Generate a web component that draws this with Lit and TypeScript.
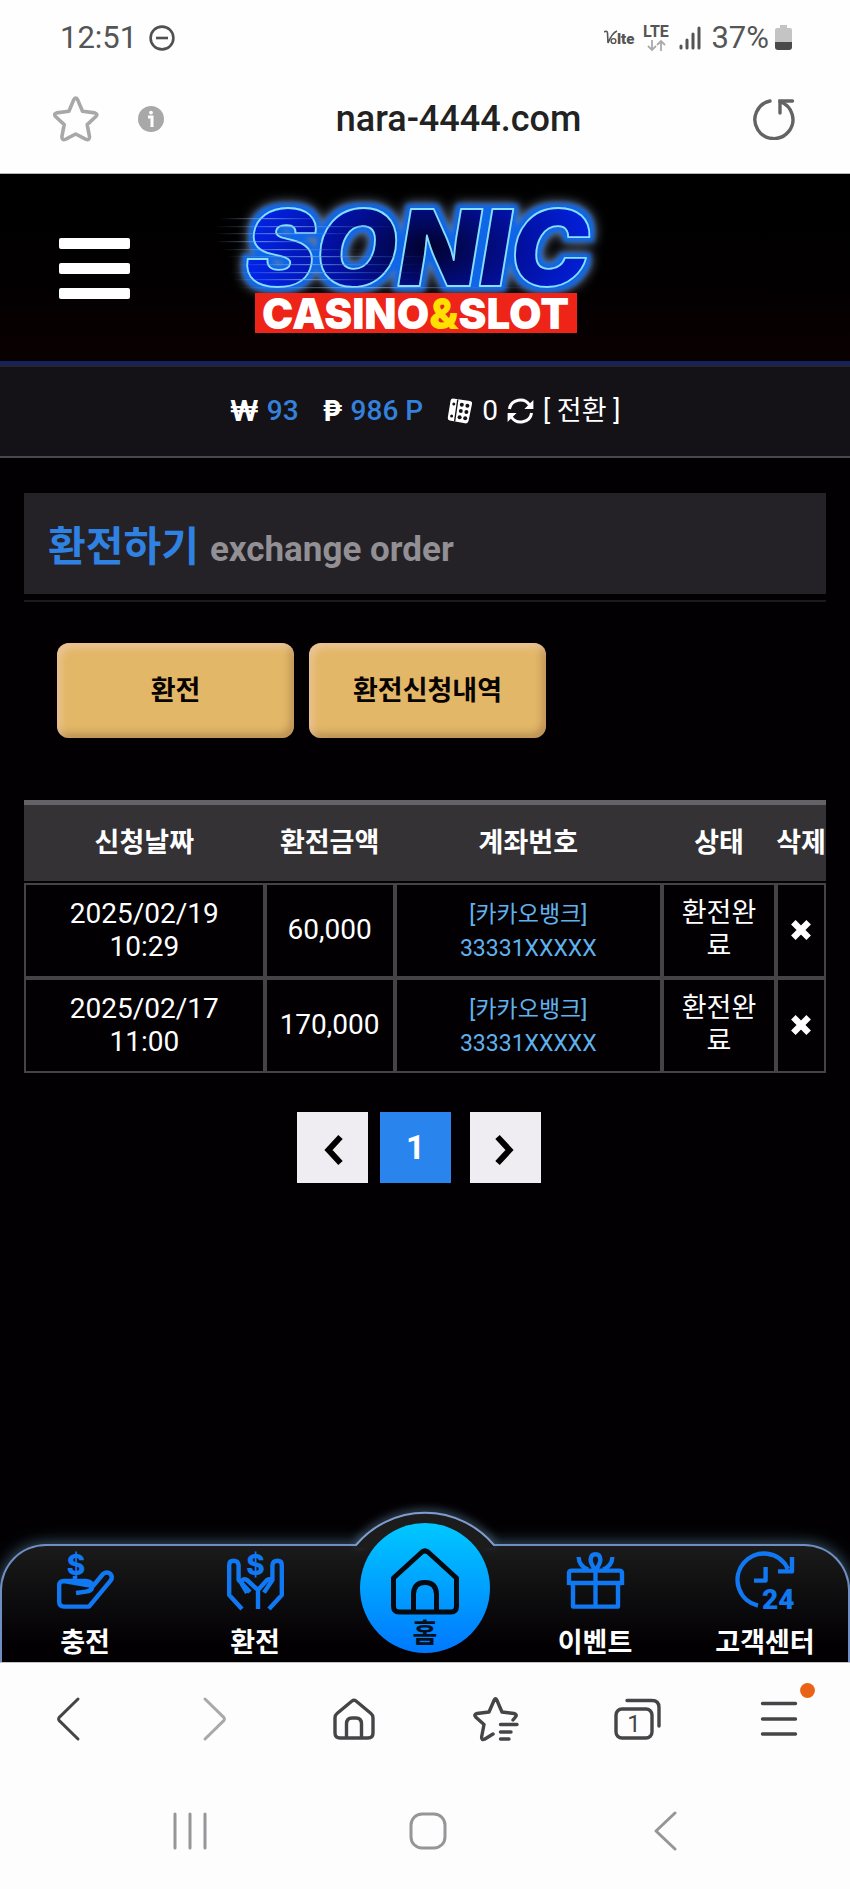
import { LitElement, html, css, svg } from "lit";
import { customElement, state } from "lit/decorators.js";

interface ExchangeRow {
  date: string;
  time: string;
  amount: string;
  bank: string;
  account: string;
  status: string;
}

const ROWS: ExchangeRow[] = [
  { date: "2025/02/19", time: "10:29", amount: "60,000", bank: "[카카오뱅크]", account: "33331XXXXX", status: "환전완료" },
  { date: "2025/02/17", time: "11:00", amount: "170,000", bank: "[카카오뱅크]", account: "33331XXXXX", status: "환전완료" },
];

const reset = css`
  * {
    box-sizing: border-box;
  }
  button {
    font: inherit;
    color: inherit;
    background: none;
    border: 0;
    padding: 0;
    margin: 0;
    cursor: pointer;
  }
  a {
    color: inherit;
    text-decoration: none;
  }
  svg {
    display: block;
    flex: none;
  }
`;

/* Phone status line and the address bar of the browser */
@customElement("browser-top")
export class BrowserTop extends LitElement {
  static styles = [
    reset,
    css`
      :host {
        display: block;
        background: #fefefe;
        border-bottom: 1px solid #b4b6b8;
      }
      .status {
        display: flex;
        align-items: center;
        height: 65px;
        padding: 11px 58px 0 60px;
        color: #555;
        font-size: 31px;
        line-height: 36px;
      }
      .time {
        margin-right: 12px;
      }
      .signals {
        display: flex;
        align-items: center;
        margin-left: auto;
      }
      .battery {
        margin-left: 6px;
      }
      .percent {
        margin-left: 9px;
      }
      .bar {
        display: flex;
        align-items: center;
        height: 108px;
        padding: 0 55px 0 53px;
      }
      .info {
        margin-left: 39px;
      }
      .address {
        flex: 1;
        text-align: center;
        color: #222;
        font-size: 36px;
        font-weight: 500;
        line-height: 40px;
      }
    `,
  ];

  render() {
    return html`
      <div class="status">
        <span class="time">12:51</span>
        <svg width="26" height="26" viewBox="0 0 26 26" fill="none" stroke="#505050" stroke-width="2.6">
          <circle cx="13" cy="13" r="11.4" />
          <path d="M7 13H19" />
        </svg>
        <div class="signals">
          <svg width="98" height="28" viewBox="0 0 98 28">
            <path d="M0 8Q3 6 3.500 9L4 19Q8 9 13 7" fill="none" stroke="#555" stroke-width="1.6" />
            <circle cx="9.5" cy="17" r="2.4" fill="none" stroke="#555" stroke-width="1.4" />
            <text x="13" y="20" font-family="Roboto" font-weight="900" font-size="15" fill="#555">lte</text>
            <text x="39" y="13" font-family="Roboto" font-weight="700" font-size="16" fill="#555">LTE</text>
            <g fill="none" stroke="#aaa" stroke-width="1.8">
              <path d="M48 16V26M44 22L48 26L52 22" />
              <path d="M57 27V17M53 21L57 17L61 21" />
            </g>
            <g stroke="#555" stroke-width="3" stroke-linecap="round">
              <path d="M77 22V24M83 16V24M89 10V24M95 4V24" />
            </g>
          </svg>
          <span class="percent">37%</span>
          <svg class="battery" width="17" height="26" viewBox="0 0 17 26">
            <path d="M5 0H12V3H15Q17 3 17 5V17H0V5Q0 3 2 3H5Z" fill="#c4c4c4" />
            <path d="M0 17H17V22Q17 25 14 25H3Q0 25 0 22Z" fill="#4a4a4a" />
          </svg>
        </div>
      </div>
      <div class="bar">
        <button aria-label="북마크">
          <svg width="46" height="46" viewBox="0 0 46 46" fill="none" stroke="#a8a8a8" stroke-width="3.6" stroke-linejoin="round">
            <path d="M20.8 3.6Q22.7 0.6 24.6 3.6L29.5 15.2L41.8 16.9Q45.4 18 42.6 20.8L34.2 28.6L36.5 40.6Q36.4 44.6 33 43.4L22.7 38L12.4 43.4Q9 44.6 8.9 40.6L11.2 28.6L2.8 20.8Q0 18 3.6 16.9L15.9 15.2Z" />
          </svg>
        </button>
        <button class="info" aria-label="사이트 정보">
          <svg width="26" height="26" viewBox="0 0 26 26">
            <circle cx="13" cy="13" r="13" fill="#a8a8a8" />
            <circle cx="13" cy="6.6" r="1.9" fill="#fff" />
            <path d="M10 11H14V21" fill="none" stroke="#fff" stroke-width="3" />
          </svg>
        </button>
        <div class="address">nara-4444.com</div>
        <button aria-label="새로고침">
          <svg width="42" height="42" viewBox="0 0 42 42" fill="none" stroke="#636363" stroke-width="3.4" stroke-linecap="round">
            <path d="M17 3A19 19 0 1 0 27 3.6" />
            <path d="M27 15V3H39.5" />
          </svg>
        </button>
      </div>
    `;
  }
}

/* Site header with the neon logo, and the balance line below it */
@customElement("site-header")
export class SiteHeader extends LitElement {
  static styles = [
    reset,
    css`
      :host {
        display: block;
      }
      .head {
        display: grid;
        grid-template-columns: 1fr auto 1fr;
        align-items: center;
        height: 187px;
        padding: 0 59px;
        background: linear-gradient(#000 0%, #020001 55%, #0a0001 100%);
      }
      .menu {
        display: grid;
        gap: 14px;
        width: 71px;
        margin-top: 1px;
      }
      .line {
        height: 11px;
        border-radius: 2px;
        background: #fff;
      }
      .balance {
        display: flex;
        align-items: center;
        justify-content: center;
        height: 97px;
        border-top: 4px solid #14225f;
        border-bottom: 2px solid #48474b;
        background: #141217;
        color: #fff;
        font-size: 28px;
        line-height: 32px;
        box-shadow: inset 0 2px 0 #26252d;
      }
      .sign {
        font-family: Inter, Roboto, sans-serif;
        font-weight: 700;
      }
      .value {
        margin: 0 24px 0 8px;
        color: #3481dc;
        font-weight: 500;
      }
      .zero {
        margin: 0 9px;
      }
      .swap {
        margin-left: 9px;
        font-size: 27px;
      }
    `,
  ];

  private speedLines() {
    const lines = [
      [5, 30, 120], [0, 38, 190], [0, 45, 160], [0, 53, 120], [6, 61, 150],
      [12, 68, 210], [20, 76, 190], [14, 84, 200], [16, 91, 180], [20, 99, 330],
    ];
    return lines.map(
      ([x, y, w]) => svg`<rect x=${x} y=${y} width=${w} height="1.2" fill="url(#streak)" />`
    );
  }

  render() {
    return html`
      <header class="head">
        <button class="menu" aria-label="메뉴">
          <span class="line"></span>
          <span class="line"></span>
          <span class="line"></span>
        </button>
        <a href="#" aria-label="SONIC CASINO&SLOT">
          <svg width="420" height="160" viewBox="0 0 420 160" overflow="visible">
            <defs>
              <linearGradient id="streak">
                <stop offset="0" stop-color="#7da8e0" stop-opacity="0" />
                <stop offset="0.4" stop-color="#7da8e0" stop-opacity="0.7" />
                <stop offset="1" stop-color="#1e50d8" stop-opacity="0" />
              </linearGradient>
              <radialGradient id="face" gradientUnits="userSpaceOnUse" cx="212" cy="60" r="190" gradientTransform="translate(0 24) scale(1 0.6)">
                <stop offset="0" stop-color="#01022c" />
                <stop offset="0.5" stop-color="#0210a0" />
                <stop offset="1" stop-color="#0226f0" />
              </radialGradient>
              <filter id="neon" x="-20%" y="-40%" width="140%" height="180%" color-interpolation-filters="sRGB">
                <feMorphology in="SourceAlpha" operator="dilate" radius="4" result="wide" />
                <feGaussianBlur in="wide" stdDeviation="2" result="soft" />
                <feFlood flood-color="#0f66e6" />
                <feComposite in2="soft" operator="in" result="rim" />
                <feGaussianBlur in="wide" stdDeviation="6" result="far" />
                <feFlood flood-color="#8496b0" />
                <feComposite in2="far" operator="in" result="halo" />
                <feMerge>
                  <feMergeNode in="halo" />
                  <feMergeNode in="rim" />
                  <feMergeNode in="SourceGraphic" />
                </feMerge>
              </filter>
            </defs>
            <text x="30" y="98" font-family="Inter" font-weight="900" font-style="italic" font-size="106" fill="url(#face)" stroke="#86e0ff" stroke-width="1.8" stroke-linejoin="round" filter="url(#neon)">SONIC</text>
            ${this.speedLines()}
            <rect x="40" y="105" width="322" height="40" fill="#ee2418" />
            <text x="47" y="141" font-family="Inter" font-weight="900" font-size="42" fill="#fff">CASINO<tspan fill="#ffe000">&amp;</tspan>SLOT</text>
          </svg>
        </a>
      </header>
      <div class="balance">
        <span class="sign">₩</span>
        <span class="value">93</span>
        <span class="sign">₱</span>
        <span class="value">986 P</span>
        <svg width="26" height="26" viewBox="0 0 26 26">
          <path d="M6 0.5L23 3Q25.5 3.6 25 6L21.5 23Q20.8 25.8 18 25.3L2.6 22.6Q0.4 22 0.8 19.6L3.6 2.6Q4 0.4 6 0.5Z" fill="#fff" />
          <path d="M10.800 1.500L7.600 23.500" stroke="#141217" stroke-width="1.4" />
          <g fill="#141217">
            <circle cx="14.8" cy="6.800" r="2" /><circle cx="20.4" cy="7.800" r="2" />
            <circle cx="13.8" cy="13" r="2" /><circle cx="19.4" cy="14" r="2" />
            <circle cx="12.6" cy="19.200" r="2" /><circle cx="18.2" cy="20.200" r="2" />
            <circle cx="6.800" cy="6" r="1.5" /><circle cx="4.600" cy="18" r="1.5" />
          </g>
        </svg>
        <span class="zero">0</span>
        <svg width="27" height="26" viewBox="0 0 27 26" fill="none" stroke="#fff" stroke-width="3">
          <path d="M2.4 11A11 10.6 0 0 1 22.6 7" />
          <path d="M24.6 15A11 10.6 0 0 1 4.4 19" />
          <path d="M26.4 2V11H17.400Z" fill="#fff" stroke="none" />
          <path d="M0.6 24V15H9.600Z" fill="#fff" stroke="none" />
        </svg>
        <button class="swap">[ 전환 ]</button>
      </div>
    `;
  }
}

/* Exchange order page: title, tabs, request history and pager */
@customElement("exchange-page")
export class ExchangePage extends LitElement {
  static styles = [
    reset,
    css`
      :host {
        display: block;
        padding: 35px 24px 40px;
      }
      .title {
        display: flex;
        align-items: baseline;
        gap: 11px;
        min-height: 101px;
        margin: 0;
        padding: 28px 24px 0;
        background: #242226;
        font-size: 41px;
        line-height: 52px;
        font-weight: 700;
        color: #2f81e2;
      }
      .sub {
        font-size: 35px;
        line-height: 40px;
        color: #929094;
      }
      .rule {
        height: 2px;
        margin-top: 6px;
        background: #1c1a1e;
      }
      .tabs {
        display: flex;
        gap: 15px;
        padding: 41px 33px 0;
      }
      .tab {
        width: 237px;
        height: 95px;
        border-radius: 12px;
        background: #e3b768;
        color: #080402;
        font-size: 27px;
        line-height: 32px;
        font-weight: 700;
        box-shadow: inset 4px 5px 7px rgba(240, 205, 180, 0.6), inset -4px -5px 7px rgba(140, 105, 60, 0.45);
      }
      .history {
        width: 100%;
        margin-top: 62px;
        border-collapse: separate;
        border-spacing: 0;
        table-layout: fixed;
        color: #fff;
        text-align: center;
      }
      th {
        height: 83px;
        padding: 0;
        border-top: 5px solid #646167;
        border-bottom: 2px solid #020003;
        background: #353236;
        font-size: 27px;
        line-height: 32px;
        font-weight: 700;
        white-space: nowrap;
      }
      td {
        height: 95px;
        padding: 0 10px 2px;
        border: 2px solid #454347;
        font-size: 28px;
        line-height: 33px;
      }
      .c-date {
        width: 30%;
      }
      .c-amount {
        width: 130px;
      }
      .c-status {
        width: 114px;
      }
      .c-delete {
        width: 50px;
      }
      .account {
        padding-top: 2px;
        padding-bottom: 0;
        color: #60b2ec;
        font-size: 23px;
        line-height: 34px;
      }
      .state {
        font-size: 27px;
      }
      .remove {
        padding: 0;
      }
      .remove-icon {
        margin: 3px auto 0;
      }
      .pager {
        display: flex;
        justify-content: center;
        margin-top: 39px;
        padding-right: 12px;
      }
      .page {
        display: grid;
        place-items: center;
        width: 71px;
        height: 71px;
        padding-top: 4px;
        background: #efedf1;
        color: #000;
      }
      .current {
        margin: 0 19px 0 12px;
        padding: 0;
        background: #2a84ee;
        color: #fff;
        font-size: 33px;
        line-height: 36px;
        font-weight: 700;
      }
    `,
  ];

  @state() private page = 1;

  render() {
    return html`
      <h1 class="title">환전하기 <span class="sub">exchange order</span></h1>
      <div class="rule"></div>
      <div class="tabs">
        <button class="tab">환전</button>
        <button class="tab">환전신청내역</button>
      </div>
      <table class="history">
        <thead>
          <tr>
            <th class="c-date">신청날짜</th>
            <th class="c-amount">환전금액</th>
            <th>계좌번호</th>
            <th class="c-status">상태</th>
            <th class="c-delete">삭제</th>
          </tr>
        </thead>
        <tbody>
          ${ROWS.map(
            (row) => html`
              <tr>
                <td>${row.date} ${row.time}</td>
                <td>${row.amount}</td>
                <td class="account">${row.bank}<br />${row.account}</td>
                <td class="state">${row.status}</td>
                <td class="remove">
                  <button aria-label="삭제">
                    <svg class="remove-icon" width="20" height="20" viewBox="0 0 20 20">
                      <path d="M4.6 4.6L15.4 15.4M15.4 4.6L4.6 15.4" stroke="#fff" stroke-width="6.4" stroke-linecap="square" />
                    </svg>
                  </button>
                </td>
              </tr>
            `
          )}
        </tbody>
      </table>
      <nav class="pager">
        <button class="page" aria-label="이전">
          <svg width="22" height="32" viewBox="0 0 22 32" fill="none" stroke="#000" stroke-width="6">
            <path d="M18.500 3L6.500 16L18.500 29" />
          </svg>
        </button>
        <button class="page current">${this.page}</button>
        <button class="page" aria-label="다음">
          <svg width="22" height="32" viewBox="0 0 22 32" fill="none" stroke="#000" stroke-width="6">
            <path d="M2.500 3L14.500 16L2.500 29" />
          </svg>
        </button>
      </nav>
    `;
  }
}

const depositIcon = svg`
  <text x="19" y="23" text-anchor="middle" font-family="Inter" font-weight="800" font-size="28" fill="#0f78f2" stroke="none">$</text>
  <path d="M18 24V28M7 29H29Q37 30 35 36Q34 39 29 39.6L19 41M36 34L46 22Q50 19 53.6 22Q56 25 53.6 28.6L32 54.6H7Q2.2 54.6 2.2 50V33.6Q2.2 29 7 29Z" />`;

const withdrawIcon = svg`
  <text x="28.5" y="23" text-anchor="middle" font-family="Inter" font-weight="800" font-size="28" fill="#0f78f2" stroke="none">$</text>
  <path d="M15 57L2.2 43V13Q2.2 8.8 6.6 8.8T11.6 13V28L23 40M42 57L54.8 43V13Q54.8 8.8 50.4 8.8T45.4 13V28L37 40.6M31 57V38M31 38L20 28Q16 26 14.6 29.6Q14 32 16 34L20 41M31 38L40 28Q43 26 45 29" />`;

const giftIcon = svg`
  <path d="M6 31V54.6H51V31M2 31H55M2 33V21Q2 18.6 5 18.6H52Q55 18.6 55 21V33M28.5 18.6V54.6M28.5 18Q23.6 12 23.6 7.6Q24 2.2 28.5 2.2T33.4 7.6Q33.4 12 28.5 18ZM21 17.6Q12 14 11.6 5M36 17.6Q45 14 45.4 5" />`;

const supportIcon = svg`
  <path d="M21 53.6A26.4 26.4 0 1 1 51 17M55 5V19.4H41M28.6 15V28.6H17" />
  <text x="25" y="57" font-family="Roboto" font-weight="900" font-size="28" fill="#0f78f2" stroke="none">24</text>`;

@customElement("site-dock")
export class SiteDock extends LitElement {
  static styles = [
    reset,
    css`
      :host {
        display: block;
        position: relative;
      }
      .shape {
        filter: drop-shadow(0 0 8px rgba(110, 165, 195, 0.6));
      }
      .panel {
        height: 118px;
        border: 2px solid #6f8fc4;
        border-bottom: 0;
        border-radius: 46px 46px 0 0;
        background: linear-gradient(#1b1b1b, #020003 85%);
      }
      .dome {
        position: absolute;
        left: 50%;
        top: -32px;
        margin-left: -70px;
      }
      .items {
        position: absolute;
        inset: 0;
        display: grid;
        grid-template-columns: repeat(5, 1fr);
        color: #fff;
        font-size: 27px;
        line-height: 32px;
        font-weight: 700;
        text-align: center;
      }
      .item {
        display: flex;
        flex-direction: column;
        align-items: center;
        gap: 18px;
        padding-top: 8px;
      }
      .icon {
        overflow: visible;
      }
      .home {
        justify-self: center;
        width: 130px;
        height: 130px;
        margin-top: -21px;
        padding-top: 25px;
        gap: 2px;
        border-radius: 50%;
        background: linear-gradient(#00c8ff, #0078ff);
        color: #06101c;
      }
      .clip {
        overflow: hidden;
        margin-top: -60px;
        padding-top: 60px;
      }
    `,
  ];

  private item(label: string, icon: unknown) {
    return html`
      <a class="item" href="#">
        <svg class="icon" width="57" height="57" viewBox="0 0 57 57" fill="none" stroke="#0f78f2" stroke-width="4.4" stroke-linejoin="round">${icon}</svg>
        <span>${label}</span>
      </a>
    `;
  }

  render() {
    return html`
      <div class="clip">
        <div class="shape">
          <div class="panel"></div>
        </div>
      </div>
      <svg class="dome" width="140" height="36" viewBox="0 0 140 36" overflow="visible">
        <defs>
          <filter id="halo" x="-20%" y="-80%" width="140%" height="220%">
            <feGaussianBlur stdDeviation="5" />
          </filter>
        </defs>
        <path d="M2 32A90 90 0 0 1 138 32" fill="none" stroke="#7fb0d4" stroke-width="6" opacity="0.55" filter="url(#halo)" />
        <path d="M1 36L2 33A90 90 0 0 1 138 33L139 36Z" fill="#1c1c1d" />
        <path d="M1 33A90 90 0 0 1 139 33" fill="none" stroke="#7f9ccc" stroke-width="2" />
      </svg>
      <nav class="items">
        ${this.item("충전", depositIcon)} ${this.item("환전", withdrawIcon)}
        <a class="item home" href="#">
          <svg width="68" height="68" viewBox="0 0 68 68" fill="none" stroke="#050a10" stroke-width="5" stroke-linejoin="round">
            <path d="M8 64Q2.5 64 2.5 58V30L31 4Q34 1.6 37 4L65.500 30V58Q65.500 64 60 64Z" />
            <path d="M22.500 64V46Q23 34.500 34 34.500T45.500 46V64" />
          </svg>
          <span>홈</span>
        </a>
        ${this.item("이벤트", giftIcon)} ${this.item("고객센터", supportIcon)}
      </nav>
    `;
  }
}

/* Browser toolbar and the phone's navigation keys */
@customElement("browser-bottom")
export class BrowserBottom extends LitElement {
  static styles = [
    reset,
    css`
      :host {
        display: block;
        background: #fdfdfe;
        box-shadow: inset 0 1px 0 #c4c4c4;
      }
      .tools {
        display: grid;
        grid-template-columns: repeat(6, 1fr);
        height: 114px;
      }
      .keys {
        display: grid;
        grid-template-columns: repeat(3, 1fr);
        height: 113px;
        padding: 0 66px 4px 72px;
      }
      .key {
        display: grid;
        place-items: center;
      }
    `,
  ];

  render() {
    return html`
      <nav class="tools">
        <button class="key" aria-label="뒤로">
          <svg width="48" height="48" viewBox="0 0 48 48" fill="none" stroke="#454548" stroke-width="3" stroke-linecap="round" stroke-linejoin="round">
            <path d="M31 4L12 22.600Q11 24 12 25.400L31 44" />
          </svg>
        </button>
        <button class="key" aria-label="앞으로">
          <svg width="48" height="48" viewBox="0 0 48 48" fill="none" stroke="#a9a9ac" stroke-width="3" stroke-linecap="round" stroke-linejoin="round">
            <path d="M17 4L36 22.600Q37 24 36 25.400L17 44" />
          </svg>
        </button>
        <button class="key" aria-label="홈">
          <svg width="48" height="48" viewBox="0 0 48 48" fill="none" stroke="#454548" stroke-width="3.4" stroke-linejoin="round">
            <path d="M22 6Q24 4.500 26 6L41 18.500Q43 20 43 23V38Q43 43 38 43H10Q5 43 5 38V23Q5 20 7 18.500Z" />
            <path d="M16.500 43V29Q16.500 23 22 23H26Q31.500 23 31.500 29V43" />
          </svg>
        </button>
        <button class="key" aria-label="즐겨찾기">
          <svg width="48" height="48" viewBox="0 0 48 48" fill="none" stroke="#454548" stroke-width="3.4" stroke-linecap="round" stroke-linejoin="round">
            <path d="M41 25L43.500 22Q45.500 19.500 42 18.500L30 17L24.800 5Q23.500 2.500 22.200 5L17 17L5 18.500Q1.500 19.500 3.600 22L12 29.500L9.600 42Q9.500 45.500 12.500 44.200L21 39" />
            <path d="M28.500 29.500H45M28.500 37H39M28.500 44H37" />
          </svg>
        </button>
        <button class="key" aria-label="탭">
          <svg width="48" height="48" viewBox="0 0 48 48" fill="none" stroke="#454548" stroke-width="3.4" stroke-linecap="round">
            <rect x="3" y="14" width="36" height="29" rx="6" />
            <path d="M14 5.500H39Q46 5.500 46 12.500V31" />
            <text x="21" y="37" text-anchor="middle" font-family="Roboto" font-size="24" fill="#454548" stroke="none">1</text>
          </svg>
        </button>
        <button class="key" aria-label="메뉴">
          <svg width="48" height="48" viewBox="0 0 48 48" overflow="visible">
            <path d="M7.500 8.500H40.500M7.500 24H40.500M7.500 39H40.500" stroke="#454548" stroke-width="3.400" stroke-linecap="round" />
            <circle cx="52.500" cy="-4.500" r="7.400" fill="#ea6216" />
          </svg>
        </button>
      </nav>
      <nav class="keys">
        <button class="key" aria-label="최근 앱">
          <svg width="40" height="40" viewBox="0 0 40 40" stroke="#969698" stroke-width="3" stroke-linecap="round">
            <path d="M4 3V37M19 3V37M34 3V37" />
          </svg>
        </button>
        <button class="key" aria-label="홈 화면">
          <svg width="40" height="40" viewBox="0 0 40 40" fill="none" stroke="#969698" stroke-width="3">
            <rect x="3" y="3" width="34" height="34" rx="11" />
          </svg>
        </button>
        <button class="key" aria-label="뒤로 가기">
          <svg width="40" height="40" viewBox="0 0 40 40" fill="none" stroke="#969698" stroke-width="3" stroke-linecap="round" stroke-linejoin="round">
            <path d="M30 2L11 20L30 38" />
          </svg>
        </button>
      </nav>
    `;
  }
}

@customElement("app-root")
export class AppRoot extends LitElement {
  static styles = css`
    :host {
      display: flex;
      flex-direction: column;
      min-height: 100vh;
      background: #020003;
      font-family: Roboto, "Noto Sans CJK KR", sans-serif;
    }
    .content {
      flex: 1;
    }
  `;

  render() {
    return html`
      <browser-top></browser-top>
      <site-header></site-header>
      <exchange-page class="content"></exchange-page>
      <site-dock></site-dock>
      <browser-bottom></browser-bottom>
    `;
  }
}
